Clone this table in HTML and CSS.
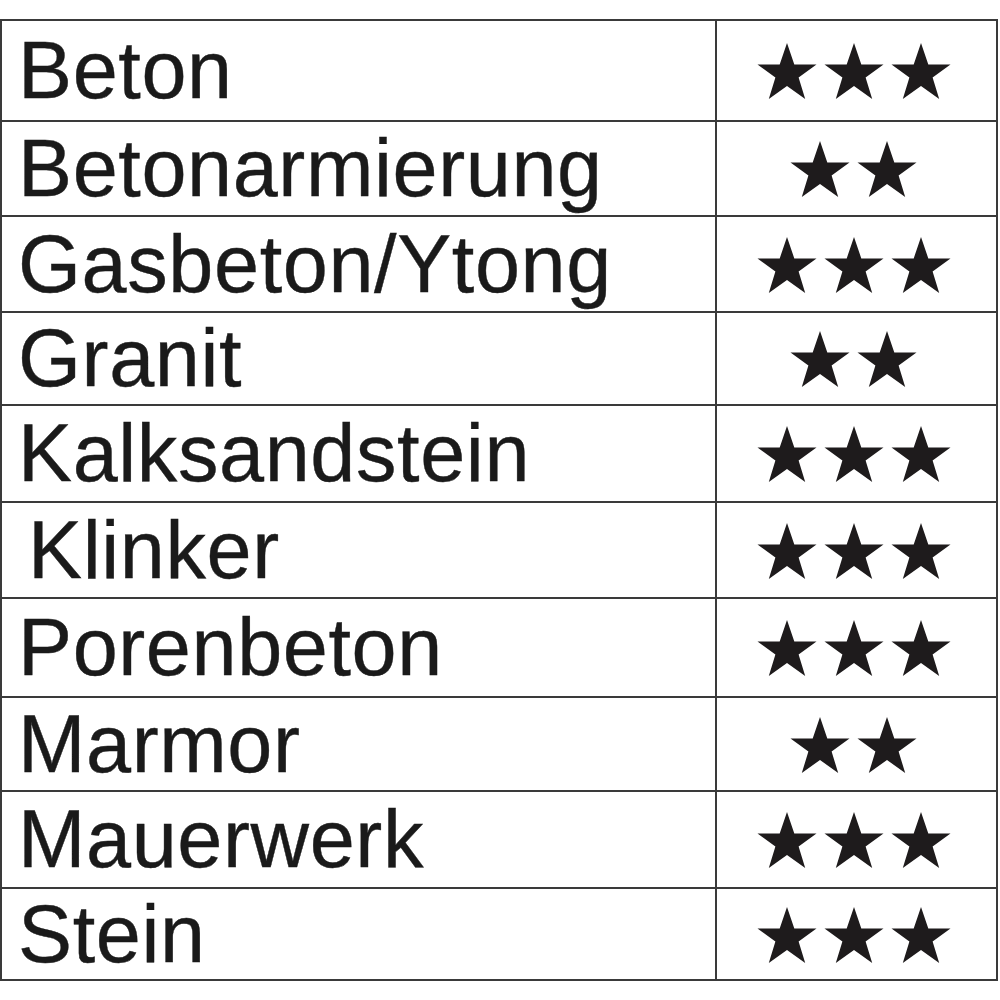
FILE: index.html
```html
<!DOCTYPE html>
<html lang="de">
<head>
<meta charset="utf-8">
<title>Materialien</title>
<link rel="stylesheet" href="styles.css">
</head>
<body>
<svg width="0" height="0" class="defs">
  <defs>
    <polygon id="star" points="31,0 38.3,21.4 60.5,21.4 42.6,34.6 49.2,56 31,43 12.8,56 19.4,34.6 1.5,21.4 23.7,21.4"/>
  </defs>
</svg>
<table class="grid">
  <tr><td class="name">Beton</td><td class="rating"><span class="stars"><svg class="star" viewBox="0 0 62 57"><use href="#star"/></svg><svg class="star" viewBox="0 0 62 57"><use href="#star"/></svg><svg class="star" viewBox="0 0 62 57"><use href="#star"/></svg></span></td></tr>
  <tr><td class="name">Betonarmierung</td><td class="rating"><span class="stars"><svg class="star" viewBox="0 0 62 57"><use href="#star"/></svg><svg class="star" viewBox="0 0 62 57"><use href="#star"/></svg></span></td></tr>
  <tr><td class="name">Gasbeton/Ytong</td><td class="rating"><span class="stars"><svg class="star" viewBox="0 0 62 57"><use href="#star"/></svg><svg class="star" viewBox="0 0 62 57"><use href="#star"/></svg><svg class="star" viewBox="0 0 62 57"><use href="#star"/></svg></span></td></tr>
  <tr><td class="name">Granit</td><td class="rating"><span class="stars"><svg class="star" viewBox="0 0 62 57"><use href="#star"/></svg><svg class="star" viewBox="0 0 62 57"><use href="#star"/></svg></span></td></tr>
  <tr><td class="name">Kalksandstein</td><td class="rating"><span class="stars"><svg class="star" viewBox="0 0 62 57"><use href="#star"/></svg><svg class="star" viewBox="0 0 62 57"><use href="#star"/></svg><svg class="star" viewBox="0 0 62 57"><use href="#star"/></svg></span></td></tr>
  <tr><td class="name indent">Klinker</td><td class="rating"><span class="stars"><svg class="star" viewBox="0 0 62 57"><use href="#star"/></svg><svg class="star" viewBox="0 0 62 57"><use href="#star"/></svg><svg class="star" viewBox="0 0 62 57"><use href="#star"/></svg></span></td></tr>
  <tr><td class="name">Porenbeton</td><td class="rating"><span class="stars"><svg class="star" viewBox="0 0 62 57"><use href="#star"/></svg><svg class="star" viewBox="0 0 62 57"><use href="#star"/></svg><svg class="star" viewBox="0 0 62 57"><use href="#star"/></svg></span></td></tr>
  <tr><td class="name">Marmor</td><td class="rating"><span class="stars"><svg class="star" viewBox="0 0 62 57"><use href="#star"/></svg><svg class="star" viewBox="0 0 62 57"><use href="#star"/></svg></span></td></tr>
  <tr><td class="name">Mauerwerk</td><td class="rating"><span class="stars"><svg class="star" viewBox="0 0 62 57"><use href="#star"/></svg><svg class="star" viewBox="0 0 62 57"><use href="#star"/></svg><svg class="star" viewBox="0 0 62 57"><use href="#star"/></svg></span></td></tr>
  <tr><td class="name">Stein</td><td class="rating"><span class="stars"><svg class="star" viewBox="0 0 62 57"><use href="#star"/></svg><svg class="star" viewBox="0 0 62 57"><use href="#star"/></svg><svg class="star" viewBox="0 0 62 57"><use href="#star"/></svg></span></td></tr>
</table>
</body>
</html>
```

FILE: styles.css
```css
html, body {
  margin: 0;
  padding: 0;
  background: #ffffff;
}

body {
  padding-top: 19px;
  font-family: "Liberation Sans", Arial, sans-serif;
  color: #1a1a1a;
}

.defs {
  position: absolute;
  width: 0;
  height: 0;
}

.grid {
  border-collapse: collapse;
  width: 998px;
  margin: 0;
  table-layout: fixed;
}

.grid td {
  border: 2px solid #3a3a3a;
  padding: 0;
  vertical-align: middle;
}

.grid tr {
  height: 96px;
}

.grid tr:nth-child(1) { height: 101px; }
.grid tr:nth-child(2) { height: 95px; }
.grid tr:nth-child(3) { height: 96px; }
.grid tr:nth-child(4) { height: 93px; }
.grid tr:nth-child(5) { height: 97px; }
.grid tr:nth-child(6) { height: 96px; }
.grid tr:nth-child(7) { height: 99px; }
.grid tr:nth-child(8) { height: 94px; }
.grid tr:nth-child(9) { height: 97px; }
.grid tr:nth-child(10) { height: 92px; }

.name {
  width: 697px;
  font-size: 81px;
  line-height: 1;
  letter-spacing: 0.6px;
  -webkit-text-stroke: 0.4px #1a1a1a;
  padding-left: 16px !important;
  white-space: nowrap;
}

.name.indent {
  padding-left: 26px !important;
}

.rating {
  text-align: center;
  padding-right: 6px !important;
}

.stars {
  display: inline-flex;
  gap: 5px;
  vertical-align: middle;
  padding-top: 2px;
}

.star {
  width: 62px;
  height: 57px;
  display: block;
  fill: #1e1b1c;
}
```
